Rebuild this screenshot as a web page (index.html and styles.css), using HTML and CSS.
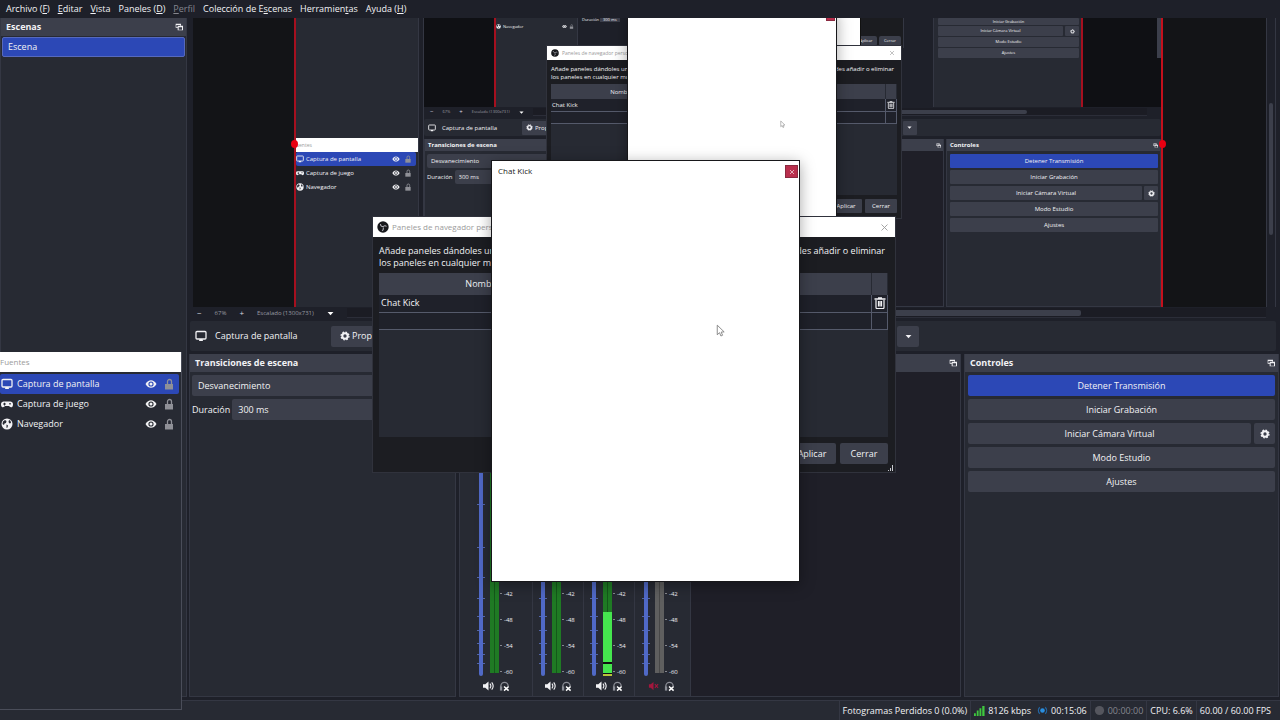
FILE: index.html
```html
<!DOCTYPE html>
<html lang="es">

<head>
    <meta charset="UTF-8">
    <meta name="viewport" content="width=device-width, initial-scale=1.0">
    <title>OBS Studio</title>
    <link rel="stylesheet" href="styles.css">
</head>

<body>
    <!-- Iconos compartidos -->
    <svg class="sprite" aria-hidden="true">
        <symbol id="monitor" viewBox="0 0 12 12"><path d="M2 1.5h8a1 1 0 0 1 1 1v5.500a1 1 0 0 1-1 1H2a1 1 0 0 1-1-1V2.500a1 1 0 0 1 1-1z" fill="none" stroke="currentColor" stroke-width="1.300"/><path d="M4 11l.5-2h3l.5 2z" fill="currentColor"/></symbol>
        <symbol id="gamepad" viewBox="0 0 12 12"><path fill-rule="evenodd" fill="currentColor" d="M3 3.500h6a2.800 2.800 0 0 1 3 3c0 2-1 2.800-2 2.800S8.500 8 7.800 8H4.200C3.500 8 3 9.300 2 9.300S0 8.500 0 6.500a2.800 2.800 0 0 1 3-3zM3 4.800v.8h-.9v1H3v.8h1v-.8h.9v-1H4v-.8zM8.300 5v1.500h1.400V5z"/></symbol>
        <symbol id="globe" viewBox="0 0 12 12"><circle cx="6" cy="6" r="5.500" fill="currentColor"/><path d="M2 3.500l2-1.500 1.500 1L5 5l-1.500.5L3 7 1.500 6zM8 2l1.500.8.5 2.200-1.500.5-1-1.500zM5.500 6.500l1.500 1-.5 2-1 .5z" fill="#272a33"/></symbol>
        <symbol id="eye" viewBox="0 0 12 12"><path fill-rule="evenodd" fill="currentColor" d="M.5 6C2 3.300 4 2.200 6 2.200S10 3.300 11.500 6C10 8.700 8 9.800 6 9.800S2 8.700.5 6zM6 3.400a2.600 2.600 0 1 0 0 5.200 2.600 2.600 0 0 0 0-5.200z"/><circle cx="6" cy="6" r="1.500" fill="currentColor"/></symbol>
        <symbol id="lock" viewBox="0 0 12 12"><path d="M4.500 6V3.500a2 2 0 0 1 4 0V6" fill="none" stroke="currentColor" stroke-width="1.300"/><path d="M2 6h8v5.500H2z" fill="currentColor"/></symbol>
        <symbol id="gear" viewBox="0 0 12 12"><circle cx="6" cy="6" r="3.200" fill="none" stroke="currentColor" stroke-width="2.400"/><circle cx="6" cy="6" r="4.700" fill="none" stroke="currentColor" stroke-width="1.600" stroke-dasharray="2 1.690"/></symbol>
        <symbol id="popout" viewBox="0 0 12 12"><path fill-rule="evenodd" fill="currentColor" d="M1 1h8v3h3v7H4V7H1zM2 3v3h2V4h4V3zM5.500 6.500V10h5V6.500z"/></symbol>
        <symbol id="trash" viewBox="0 0 12 12"><path d="M.5 2h11M4 1h4" stroke="currentColor" stroke-width="1.300"/><path d="M2 3v7.500a1 1 0 0 0 1 1h6a1 1 0 0 0 1-1V3M4.500 4v5.500M6 4v5.500M7.500 4v5.500" fill="none" stroke="currentColor" stroke-width="1.200"/></symbol>
        <symbol id="speaker" viewBox="0 0 12 12"><path d="M0 4h2.500L6 1v10L2.500 8H0z" fill="currentColor"/><path d="M7.500 3.500c1.300 1.500 1.300 3.500 0 5M9.500 2c2 2.500 2 5.500 0 8" fill="none" stroke="currentColor" stroke-width="1.200"/></symbol>
        <symbol id="muted" viewBox="0 0 12 12"><path d="M1 4h2l3-2.500v9L3 8H1z" fill="currentColor"/><path d="M7.500 4l3.500 4M11 4L7.500 8" stroke="currentColor" stroke-width="1.200"/></symbol>
        <symbol id="phones" viewBox="0 0 12 12"><path d="M2 10V6a4 4 0 0 1 8 0" fill="none" stroke="#8b8d96" stroke-width="1.400"/><path d="M1 6.500h2.500V11H1z" fill="#8b8d96"/><path d="M5.500 6.500l5 4.500M10.500 6.500L5.500 11" stroke="#fff" stroke-width="1.700"/></symbol>
        <symbol id="obs" viewBox="0 0 12 12"><circle cx="6" cy="6" r="5.700" fill="#17181c"/><path d="M6 5.500C4.500 5.500 3.300 4.500 3.500 3M6 6c1-1.500 2.500-1.700 3.500-.5M6 6.500c.8 1.300.3 2.700-1 3.200" fill="none" stroke="#b0b0b6" stroke-width="1.100"/></symbol>
        <symbol id="caret" viewBox="0 0 12 12"><path d="M1 3.500h10L6 9z" fill="currentColor"/></symbol>
        <symbol id="cross" viewBox="0 0 12 12"><path d="M2 2l8 8M10 2l-8 8" stroke="currentColor" stroke-width="1.200"/></symbol>
        <symbol id="cursor" viewBox="0 0 12 16"><path d="M1.500 1v11.500l2.700-2.500 1.700 4 2-.9-1.700-3.800 3.600-.2z" fill="#fff" stroke="#777" stroke-width="1"/></symbol>
        <symbol id="ticks" viewBox="0 0 8 176"><path d="M0 4.500h8M0 47.500h8M0 77.500h8M0 98.500h8M0 116.500h8M0 130.500h8M0 143.500h8M0 154.500h8M0 163.500h8" stroke="#5365a8" stroke-width="1"/></symbol>
    </svg>

    <!-- Barra de menú -->
    <nav class="menubar">
        <a href="#">Archivo (<u>F</u>)</a>
        <a href="#"><u>E</u>ditar</a>
        <a href="#"><u>V</u>ista</a>
        <a href="#">Paneles (<u>D</u>)</a>
        <a href="#" class="dim"><u>P</u>erfil</a>
        <a href="#">Colección de E<u>s</u>cenas</a>
        <a href="#">Herramien<u>t</u>as</a>
        <a href="#">Ayuda (<u>H</u>)</a>
    </nav>

    <div class="workspace">
        <!-- Escenas -->
        <section class="dock scenes">
            <h2 class="dock-title">Escenas <svg class="icon"><use href="#popout"/></svg></h2>
            <button class="scene">Escena</button>
        </section>

        <main class="main">
            <!-- Vista previa -->
            <div class="preview">
                <div class="canvas">
                    <div class="screen">
                        <div class="screen-left">
                            <div class="blank"></div>
                            <section class="sources mini">
                                <h2 class="window-title">uentes</h2>
                                <ul>
                                    <li class="selected"><svg class="icon"><use href="#monitor"/></svg><span>Captura de pantalla</span><svg class="icon"><use href="#eye"/></svg><svg class="icon lock"><use href="#lock"/></svg></li>
                                    <li><svg class="icon"><use href="#gamepad"/></svg><span>Captura de juego</span><svg class="icon"><use href="#eye"/></svg><svg class="icon lock"><use href="#lock"/></svg></li>
                                    <li><svg class="icon"><use href="#globe"/></svg><span>Navegador</span><svg class="icon"><use href="#eye"/></svg><svg class="icon lock"><use href="#lock"/></svg></li>
                                </ul>
                            </section>
                        </div>
                        <div class="screen-main mini">
                            <div class="echo">
                                <div class="echo-screen">
                                    <div class="echo-sources">
                                        <svg class="icon"><use href="#globe"/></svg><span>Navegador</span>
                                        <svg class="icon"><use href="#eye"/></svg><svg class="icon lock"><use href="#lock"/></svg>
                                    </div>
                                    <div class="echo-docks">Duración <span class="echo-field">300 ms</span></div>
                                    <div class="echo-controls">
                                        <button class="btn">Iniciar Grabación</button>
                                        <div class="pair">
                                            <button class="btn">Iniciar Cámara Virtual</button>
                                            <button class="btn gear" aria-label="Configurar"><svg class="icon"><use href="#gear"/></svg></button>
                                        </div>
                                        <button class="btn">Modo Estudio</button>
                                        <button class="btn">Ajustes</button>
                                    </div>
                                </div>
                                <div class="echo-scroll"></div>
                            </div>
                            <div class="zoombar">
                                <span>−</span><span>67%</span><span>+</span><span>Escalado (1300x731)</span>
                                <svg class="icon"><use href="#caret"/></svg>
                                <div class="track"><div class="thumb"></div></div>
                            </div>
                            <div class="context">
                                <svg class="icon"><use href="#monitor"/></svg><span class="name">Captura de pantalla</span>
                                <button class="btn"><svg class="icon"><use href="#gear"/></svg>Propiedades</button>
                                <button class="btn more" aria-label="Más"><svg class="icon"><use href="#caret"/></svg></button>
                            </div>
                            <div class="docks">
                                <section class="dock transitions">
                                    <h2 class="dock-title">Transiciones de escena</h2>
                                    <div class="dock-body">
                                        <select class="field" aria-label="Transición"><option>Desvanecimiento</option></select>
                                        <label class="duration">Duración <input class="field" value="300 ms"></label>
                                    </div>
                                </section>
                                <section class="dock mixer">
                                    <h2 class="dock-title"><span></span><svg class="icon"><use href="#popout"/></svg></h2>
                                </section>
                                <section class="dock controls">
                                    <h2 class="dock-title">Controles <svg class="icon"><use href="#popout"/></svg></h2>
                                    <div class="dock-body">
                                        <button class="btn primary">Detener Transmisión</button>
                                        <button class="btn">Iniciar Grabación</button>
                                        <div class="pair">
                                            <button class="btn">Iniciar Cámara Virtual</button>
                                            <button class="btn gear" aria-label="Configurar"><svg class="icon"><use href="#gear"/></svg></button>
                                        </div>
                                        <button class="btn">Modo Estudio</button>
                                        <button class="btn">Ajustes</button>
                                    </div>
                                </section>
                            </div>
                        </div>

                        <!-- Ventanas dentro de la captura -->
                        <div class="echo-dialog">
                            <button class="btn">Aplicar</button>
                            <button class="btn">Cerrar</button>
                        </div>
                        <div class="echo-chat"></div>
                        <div class="dialog mini">
                            <h2 class="window-title"><svg class="icon"><use href="#obs"/></svg><span>Paneles de navegador personalizados</span><svg class="icon x"><use href="#cross"/></svg></h2>
                            <div class="dialog-body">
                                <p><span>Añade paneles dándoles un nombre</span><span>Puedes añadir o eliminar</span></p>
                                <p>los paneles en cualquier momento.</p>
                                <div class="table-box">
                                    <table>
                                        <thead><tr><th class="col-name">Nombre</th><th>URL</th><th class="col-del"></th></tr></thead>
                                        <tbody>
                                            <tr><td>Chat Kick</td><td></td><td><svg class="icon"><use href="#trash"/></svg></td></tr>
                                            <tr><td></td><td></td><td></td></tr>
                                        </tbody>
                                    </table>
                                </div>
                                <div class="dialog-footer"><button class="btn">Aplicar</button><button class="btn">Cerrar</button></div>
                            </div>
                        </div>
                        <div class="chat mini">
                            <button class="close" aria-label="Cerrar"></button>
                            <svg class="cursor"><use href="#cursor"/></svg>
                        </div>
                    </div>
                    <span class="handle left"></span>
                    <span class="handle right"></span>
                </div>
                <div class="vscroll"><div class="thumb"></div></div>
            </div>

            <div class="zoombar">
                <span>−</span><span>67%</span><span>+</span><span>Escalado (1300x731)</span>
                <svg class="icon"><use href="#caret"/></svg>
                <div class="track"><div class="thumb"></div></div>
            </div>

            <div class="context">
                <svg class="icon"><use href="#monitor"/></svg><span class="name">Captura de pantalla</span>
                <button class="btn"><svg class="icon"><use href="#gear"/></svg>Propiedades</button>
                <button class="btn more" aria-label="Más"><svg class="icon"><use href="#caret"/></svg></button>
            </div>

            <div class="docks">
                <section class="dock transitions">
                    <h2 class="dock-title">Transiciones de escena</h2>
                    <div class="dock-body">
                        <select class="field" aria-label="Transición"><option>Desvanecimiento</option></select>
                        <label class="duration">Duración <input class="field" value="300 ms"></label>
                    </div>
                </section>

                <!-- Mezclador de audio -->
                <section class="dock mixer">
                    <h2 class="dock-title"><span></span><svg class="icon"><use href="#popout"/></svg></h2>
                    <div class="channels">
                        <div class="channel wide">
                            <div class="strip">
                                <div class="fader"><svg><use href="#ticks"/></svg><input type="range" aria-label="Volumen 1"></div>
                                <div class="meter"></div>
                                <ul><li>-42</li><li>-48</li><li>-54</li><li>-60</li></ul>
                            </div>
                            <div class="buttons"><svg class="icon"><use href="#speaker"/></svg><svg class="icon"><use href="#phones"/></svg></div>
                        </div>
                        <div class="channel">
                            <div class="strip">
                                <div class="fader"><svg><use href="#ticks"/></svg><input type="range" aria-label="Volumen 2"></div>
                                <div class="meter"></div>
                                <ul><li>-42</li><li>-48</li><li>-54</li><li>-60</li></ul>
                            </div>
                            <div class="buttons"><svg class="icon"><use href="#speaker"/></svg><svg class="icon"><use href="#phones"/></svg></div>
                        </div>
                        <div class="channel">
                            <div class="strip">
                                <div class="fader"><svg><use href="#ticks"/></svg><input type="range" aria-label="Volumen 3"></div>
                                <div class="meter active"><div class="level"></div></div>
                                <ul><li>-42</li><li>-48</li><li>-54</li><li>-60</li></ul>
                            </div>
                            <div class="buttons"><svg class="icon"><use href="#speaker"/></svg><svg class="icon"><use href="#phones"/></svg></div>
                        </div>
                        <div class="channel last">
                            <div class="strip">
                                <div class="fader"><svg><use href="#ticks"/></svg><input type="range" aria-label="Volumen 4"></div>
                                <div class="meter off"></div>
                                <ul><li>-42</li><li>-48</li><li>-54</li><li>-60</li></ul>
                            </div>
                            <div class="buttons"><svg class="icon red"><use href="#muted"/></svg><svg class="icon"><use href="#phones"/></svg></div>
                        </div>
                    </div>
                </section>

                <section class="dock controls">
                    <h2 class="dock-title">Controles <svg class="icon"><use href="#popout"/></svg></h2>
                    <div class="dock-body">
                        <button class="btn primary">Detener Transmisión</button>
                        <button class="btn">Iniciar Grabación</button>
                        <div class="pair">
                            <button class="btn">Iniciar Cámara Virtual</button>
                            <button class="btn gear" aria-label="Configurar"><svg class="icon"><use href="#gear"/></svg></button>
                        </div>
                        <button class="btn">Modo Estudio</button>
                        <button class="btn">Ajustes</button>
                    </div>
                </section>
            </div>
        </main>
    </div>

    <!-- Barra de estado -->
    <footer class="statusbar">
        <span class="cell">Fotogramas Perdidos 0 (0.0%)</span>
        <span class="cell"><svg class="icon" viewBox="0 0 12 12"><path d="M0 9h2v3H0zM3 6h2v6H3zM6 3.500h2V12H6zM9 1h2.500v11H9z" fill="#3fc83f"/></svg>8126 kbps</span>
        <span class="cell plain"><svg class="icon" viewBox="0 0 12 12"><circle cx="6" cy="6" r="2.500" fill="#2a8fe0"/><path d="M3 2.500C1 4.500 1 7.500 3 9.500M9 2.500c2 2 2 5 0 7" fill="none" stroke="#2467a5" stroke-width="1.300"/></svg>00:15:06</span>
        <span class="cell dim"><svg class="icon" viewBox="0 0 12 12"><circle cx="6" cy="6" r="5" fill="#55565e"/></svg>00:00:00</span>
        <span class="cell">CPU: 6.6%</span>
        <span class="cell">60.00 / 60.00 FPS</span>
    </footer>

    <!-- Ventana flotante de fuentes -->
    <section class="sources floating">
        <h2 class="window-title">Fuentes</h2>
        <ul>
            <li class="selected"><svg class="icon"><use href="#monitor"/></svg><span>Captura de pantalla</span><svg class="icon"><use href="#eye"/></svg><svg class="icon lock"><use href="#lock"/></svg></li>
            <li><svg class="icon"><use href="#gamepad"/></svg><span>Captura de juego</span><svg class="icon"><use href="#eye"/></svg><svg class="icon lock"><use href="#lock"/></svg></li>
            <li><svg class="icon"><use href="#globe"/></svg><span>Navegador</span><svg class="icon"><use href="#eye"/></svg><svg class="icon lock"><use href="#lock"/></svg></li>
        </ul>
    </section>

    <!-- Paneles de navegador -->
    <div class="dialog">
        <h2 class="window-title"><svg class="icon"><use href="#obs"/></svg><span>Paneles de navegador personalizados</span><svg class="icon x"><use href="#cross"/></svg></h2>
        <div class="dialog-body">
            <p><span>Añade paneles dándoles un nombre</span><span>Puedes añadir o eliminar</span></p>
            <p>los paneles en cualquier momento.</p>
            <div class="table-box">
                <table>
                    <thead><tr><th class="col-name">Nombre</th><th>URL</th><th class="col-del"></th></tr></thead>
                    <tbody>
                        <tr><td>Chat Kick</td><td></td><td><svg class="icon"><use href="#trash"/></svg></td></tr>
                        <tr><td></td><td></td><td></td></tr>
                    </tbody>
                </table>
            </div>
            <div class="dialog-footer"><button class="btn">Aplicar</button><button class="btn">Cerrar</button></div>
        </div>
        <svg class="grip" viewBox="0 0 6 6"><path d="M0 5h1v1H0zM2 3h1v3H2zM4 0h1v6H4z" fill="#c8c9d0"/></svg>
    </div>

    <!-- Chat Kick -->
    <div class="chat">
        <h2>Chat Kick</h2>
        <button class="close" aria-label="Cerrar"><svg class="icon"><use href="#cross"/></svg></button>
        <svg class="cursor"><use href="#cursor"/></svg>
    </div>
</body>

</html>
```

FILE: styles.css
```css
/* Base */
* {
    box-sizing: border-box;
}

body {
    margin: 0;
    min-height: 100vh;
    display: flex;
    flex-direction: column;
    position: relative;
    overflow: hidden;
    background-color: #1e2029;
    color: #f2f2f5;
    font-family: "Open Sans", "Noto Sans", sans-serif;
    font-size: 9px;
    line-height: 12px;
}

h2, p, ul {
    margin: 0;
    padding: 0;
    list-style: none;
    font-size: inherit;
    font-weight: normal;
}

button, input, select {
    font: inherit;
    color: inherit;
    border: none;
    margin: 0;
    padding: 0;
}

.sprite {
    display: none;
}

.icon {
    width: 12px;
    height: 12px;
    flex: none;
}

.mini {
    font-size: 6px;
    line-height: 8px;
}

.mini .icon {
    width: 8px;
    height: 8px;
}

.dim {
    color: #85868e;
}

.lock {
    color: #8f9097;
}

.red {
    color: #a3173d;
}

/* Menú */
.menubar {
    height: 18px;
    padding: 0 6px;
    display: flex;
    align-items: center;
    gap: 8px;
}

.menubar a {
    color: inherit;
    text-decoration: none;
}

.menubar .dim {
    color: #85868e;
}

/* Zona de trabajo */
.workspace {
    flex: 1;
    display: flex;
    gap: 2px;
    padding-bottom: 3px;
}

.main {
    flex: 1;
    min-width: 0;
    display: flex;
    flex-direction: column;
}

/* Paneles */
.dock {
    display: flex;
    flex-direction: column;
    background-color: #272a33;
    border: 1px solid #343743;
    border-top: none;
}

.dock-title {
    height: 18px;
    padding: 0 3px 0 5px;
    display: flex;
    align-items: center;
    justify-content: space-between;
    background-color: #3c3f4b;
    font-weight: bold;
}

.dock-title .icon {
    width: 8px;
    height: 8px;
}

.mini .dock-title {
    height: 12px;
    padding: 0 2px 0 3px;
}

.mini .dock-title .icon {
    width: 5px;
    height: 5px;
}

.scenes {
    width: 187px;
}

.scene {
    height: 20px;
    margin: 1px;
    padding: 0 5px;
    text-align: left;
    background-color: #2c48b6;
    border: 1px solid #5669bd;
    border-radius: 2px;
}

.btn {
    height: 21px;
    display: flex;
    align-items: center;
    justify-content: center;
    gap: 2px;
    background-color: #3c3f4b;
    border-radius: 2px;
}

.primary {
    background-color: #2c48b6;
}

.mini .btn {
    height: 14px;
    border-radius: 1px;
}

.btn .icon {
    width: 10px;
    height: 10px;
}

.mini .btn .icon {
    width: 7px;
    height: 7px;
}

/* Vista previa */
.preview {
    flex: 1;
    min-height: 289px;
    margin: 0 4px;
    display: flex;
}

.canvas {
    flex: 1;
    min-width: 0;
    padding: 0 103px 0 101px;
    display: flex;
    position: relative;
    background-color: #131417;
}

.screen {
    flex: 1;
    min-width: 0;
    display: flex;
    gap: 4px;
    position: relative;
    overflow: hidden;
    background-color: #1e2029;
    border-left: 2px solid #a5101f;
    border-right: 2px solid #c4101c;
}

.handle {
    position: absolute;
    top: 122px;
    width: 7px;
    height: 8px;
    border-radius: 50%;
    background-color: #e80012;
}

.handle.left {
    left: 98px;
}

.handle.right {
    right: 100px;
}

.vscroll {
    width: 10px;
    padding: 85px 2px 0;
    border-left: 1px solid #343743;
    border-right: 1px solid #343743;
}

.vscroll .thumb {
    height: 132px;
    border-radius: 2px;
    background-color: #3c3f4b;
}

.screen-left {
    width: 123px;
    display: flex;
    flex-direction: column;
    background-color: #272a33;
    border-right: 1px solid #343743;
}

.blank {
    height: 120px;
}

.screen-main {
    flex: 1;
    min-width: 0;
    display: flex;
    flex-direction: column;
    border-left: 1px solid #343743;
}

/* Imagen repetida dentro de la captura */
.echo {
    height: 89px;
    padding-left: 70px;
    display: flex;
    overflow: hidden;
    background-color: #0f1014;
}

.echo-screen {
    flex: 1;
    margin-right: 74px;
    display: flex;
    border-left: 2px solid #a5101f;
    border-right: 2px solid #a5101f;
    background-color: #1e2029;
    font-size: 4px;
}

.echo .icon, .echo .btn .icon {
    width: 5px;
    height: 5px;
}

.echo-sources {
    width: 82px;
    padding: 6px 3px 0 0;
    display: flex;
    gap: 2px;
    align-items: flex-start;
    background-color: #272a33;
    border-right: 1px solid #343743;
    line-height: 6px;
}

.echo-sources span {
    flex: 1;
}

.echo-docks {
    flex: 1;
    padding-left: 4px;
    line-height: 4px;
}

.echo-field {
    padding: 0 3px;
    background-color: #3c3f4b;
}

.echo-controls {
    width: 148px;
    padding: 0 2px 0 4px;
    background-color: #272a33;
    border-left: 1px solid #343743;
}

.echo-controls .btn {
    width: 100%;
    height: 10px;
    margin-bottom: 1px;
}

.echo-controls > .btn:first-child {
    height: 7px;
}

.echo-controls .gear {
    width: 12px;
}

.echo-scroll {
    width: 4px;
    height: 40px;
    background-color: #3c3f4b;
}

.echo-chat {
    position: absolute;
    left: 453px;
    top: 0;
    width: 112px;
    height: 29px;
    background-color: #fff;
    border-right: 1px solid #111;
}

.echo-dialog {
    position: absolute;
    left: 453px;
    top: 0;
    width: 155px;
    height: 30px;
    padding: 0 2px 2px;
    display: flex;
    gap: 2px;
    align-items: flex-end;
    justify-content: flex-end;
    background-color: #1b1c20;
    border-right: 1px solid #343743;
    font-size: 4px;
}

.echo-dialog .btn {
    width: 22px;
    height: 10px;
}

/* Zoom */
.zoombar {
    height: 12px;
    margin-left: 4px;
    padding-left: 4px;
    display: flex;
    align-items: center;
    gap: 13px;
    color: #9a9ba3;
    font-size: 6px;
}

.zoombar span:first-child, .zoombar span:nth-child(3) {
    color: #dcdce0;
    font-size: 8px;
}

.zoombar .icon {
    width: 7px;
    height: 7px;
    color: #fff;
}

.zoombar .track {
    flex: 1;
    height: 10px;
    margin-right: 14px;
    padding: 2px 0;
    background-color: #1b1c24;
    border-bottom: 1px solid #2b2d38;
}

.zoombar .thumb {
    width: 450px;
    height: 6px;
    margin-left: 284px;
    border-radius: 2px;
    background-color: #3c3f4b;
}

.mini .zoombar {
    height: 10px;
    padding-left: 2px;
    gap: 9px;
    font-size: 4px;
}

.mini .zoombar span:first-child, .mini .zoombar span:nth-child(3) {
    font-size: 6px;
}

.mini .zoombar .icon {
    width: 5px;
    height: 5px;
}

.mini .zoombar .track {
    height: 8px;
}

.mini .zoombar .thumb {
    width: 300px;
    height: 4px;
    margin-left: 194px;
}

/* Barra de la fuente */
.context {
    height: 30px;
    margin: 2px 4px 3px 1px;
    padding: 0 5px;
    display: flex;
    align-items: center;
    gap: 8px;
    background-color: #272a33;
    border-radius: 2px;
}

.context .name {
    width: 108px;
}

.context .btn {
    width: 90px;
    padding-left: 9px;
    justify-content: flex-start;
}

.context .more {
    width: 22px;
    margin-left: 468px;
    padding-left: 8px;
}

.context .more .icon {
    width: 7px;
    height: 7px;
}

.mini .context {
    height: 17px;
    margin: 2px 0 3px;
    padding: 0 4px;
    gap: 6px;
}

.mini .context .name {
    width: 74px;
}

.mini .context .btn {
    width: 60px;
    padding-left: 4px;
}

.mini .context .more {
    width: 14px;
    margin-left: 315px;
}

.mini .context .more .icon {
    width: 5px;
    height: 5px;
}

/* Fila inferior de paneles */
.docks {
    height: 343px;
    padding-right: 1px;
    display: flex;
    gap: 3px;
}

.mini .docks {
    flex: 1;
    height: auto;
    padding-right: 0;
    gap: 2px;
}

.transitions {
    width: 267px;
}

.mini .transitions {
    width: 180px;
}

.transitions .dock-body {
    padding: 3px 2px;
    display: flex;
    flex-direction: column;
    gap: 3px;
}

.field {
    height: 21px;
    padding: 0 6px;
    flex: 1 0 auto;
    appearance: none;
    background-color: #3c3f4b;
    border-radius: 2px;
}

.duration {
    display: flex;
    align-items: center;
    gap: 2px;
}

.duration .field {
    flex: 1;
    min-width: 0;
}

.mini .dock-body {
    padding: 3px 2px;
    gap: 2px;
}

.mini .field {
    height: 14px;
    padding: 0 4px;
}

.controls {
    width: 315px;
}

.mini .controls {
    width: 215px;
}

.controls .dock-body {
    padding: 3px 3px;
    display: flex;
    flex-direction: column;
    gap: 3px;
}

.mini .controls .dock-body {
    padding: 3px 2px 3px 3px;
    gap: 2px;
}

.pair {
    display: flex;
    gap: 3px;
}

.pair .btn {
    flex: 1;
}

.pair .gear {
    flex: none;
    width: 21px;
}

.mini .pair {
    gap: 2px;
}

.mini .pair .gear {
    width: 14px;
}

/* Mezclador */
.mixer {
    flex: 1;
    min-width: 0;
    background-color: #1f1f28;
}

.channels {
    flex: 1;
    display: flex;
}

.channel {
    width: 51px;
    padding: 0 0 4px 6px;
    display: flex;
    flex-direction: column;
    gap: 4px;
    background-color: #272a33;
    border-right: 1px solid #343743;
}

.channel.wide {
    width: 73px;
    padding-left: 17px;
}

.channel.last {
    width: 56px;
    padding-left: 7px;
}

.strip {
    flex: 1;
    display: flex;
    align-items: stretch;
}

.fader {
    width: 8px;
    margin-right: 5px;
    display: grid;
    justify-items: center;
    align-items: end;
}

.fader svg, .fader input {
    grid-area: 1 / 1;
}

.fader svg {
    width: 8px;
    height: 176px;
}

.fader input {
    width: 4px;
    height: 100%;
    appearance: none;
    writing-mode: vertical-lr;
    background-color: #5069c6;
    border-radius: 2px;
}

.fader input::-webkit-slider-thumb {
    appearance: none;
    width: 4px;
    height: 4px;
}

.meter {
    width: 9px;
    margin-bottom: 3px;
    display: flex;
    align-items: flex-end;
    background: linear-gradient(90deg, #1f7a24 4px, #14591a 4px 5px, #1f7a24 5px);
}

.meter.off {
    background: linear-gradient(90deg, #5f5f5f 4px, #484848 4px 5px, #5f5f5f 5px);
}

.meter.active {
    margin-bottom: 0;
}

.level {
    width: 9px;
    height: 64px;
    background: linear-gradient(#45e64e 50px, #111 50px 52px, #45e64e 52px 61px, #111 61px 62px, #b9c43a 62px);
}

.strip ul {
    padding-left: 1px;
    display: flex;
    flex-direction: column;
    justify-content: flex-end;
    font-size: 6px;
    line-height: 8px;
}

.strip li {
    height: 26px;
    display: flex;
    align-items: flex-end;
    gap: 2px;
}

.strip li::before {
    content: "";
    width: 2px;
    height: 1px;
    margin-bottom: 4px;
    background-color: #85868e;
}

.buttons {
    display: flex;
    gap: 5px;
    padding-left: 6px;
}

.buttons .icon {
    width: 11px;
}

/* Barra de estado */
.statusbar {
    height: 20px;
    padding-right: 6px;
    display: flex;
    justify-content: flex-end;
    background-color: #272a33;
    border-top: 1px solid #343743;
}

.cell {
    padding: 0 3px;
    display: flex;
    align-items: center;
    gap: 3px;
    border-left: 1px solid #343743;
}

.cell .icon {
    width: 11px;
    height: 11px;
}

.cell.plain {
    border-left: none;
}

/* Ventana de fuentes */
.sources {
    background-color: #272a33;
}

.sources.floating {
    position: absolute;
    left: 0;
    top: 352px;
    width: 182px;
    height: 358px;
    border-right: 1px solid #4a4d59;
    border-bottom: 1px solid #4a4d59;
}

.window-title {
    height: 20px;
    display: flex;
    align-items: center;
    background-color: #fff;
    color: #9b9b9b;
    font-size: 8px;
}

.mini .window-title, .sources.mini .window-title {
    height: 14px;
    font-size: 5px;
}

.sources ul {
    padding: 2px 2px 0 0;
}

.sources li {
    height: 20px;
    padding: 0 4px 0 1px;
    display: flex;
    align-items: center;
    gap: 6px;
    border-radius: 2px;
}

.sources li span {
    flex: 1;
    margin-left: -2px;
}

.sources .selected {
    background-color: #2c48b6;
}

.sources.mini ul {
    padding-top: 0;
}

.sources.mini li {
    height: 14px;
    padding: 0 4px 0 0;
    gap: 4px;
}

/* Diálogo */
.dialog {
    position: absolute;
    left: 372px;
    top: 216px;
    width: 524px;
    height: 257px;
    display: flex;
    flex-direction: column;
    background-color: #1c1d22;
    border: 1px solid #30323c;
}

.dialog .window-title {
    padding: 0 6px 0 4px;
    gap: 3px;
}

.dialog .window-title span {
    flex: 1;
}

.dialog .x {
    width: 9px;
    height: 9px;
}

.dialog.mini .x {
    width: 6px;
    height: 6px;
}

.dialog-body {
    flex: 1;
    padding: 8px 7px 8px 6px;
    display: flex;
    flex-direction: column;
}

.dialog-body p {
    display: flex;
    justify-content: space-between;
}

.dialog-body p span:last-child {
    margin-right: 3px;
}

.table-box {
    flex: 1;
    margin: 4px 0 6px;
    background-color: #272a33;
}

table {
    width: 100%;
    table-layout: fixed;
    border-collapse: collapse;
}

th {
    height: 22px;
    padding: 0;
    font-weight: normal;
    background-color: #3c3f4b;
    border-right: 1px solid #272a33;
}

.col-name {
    width: 208px;
}

.col-del {
    width: 16px;
}

td {
    height: 17px;
    padding: 0 2px;
    background-color: #1f212a;
    border-bottom: 1px solid #555a6b;
    border-right: 1px solid #555a6b;
}

td .icon {
    display: block;
}

.dialog-footer {
    display: flex;
    justify-content: flex-end;
    gap: 4px;
}

.dialog-footer .btn {
    width: 48px;
}

.grip {
    position: absolute;
    right: 1px;
    bottom: 1px;
    width: 6px;
    height: 6px;
}

.dialog.mini {
    left: 250px;
    top: 27px;
    width: 356px;
    height: 174px;
}

.dialog.mini .dialog-body {
    padding: 5px 4px;
}

.mini .table-box {
    margin: 3px 0 4px;
}

.mini th {
    height: 15px;
}

.mini td {
    height: 12px;
    padding: 0 1px;
}

.mini .col-name {
    width: 142px;
}

.mini .col-del {
    width: 11px;
}

.mini .dialog-footer {
    gap: 3px;
}

.mini .dialog-footer .btn {
    width: 32px;
}

/* Ventana del chat */
.chat {
    position: absolute;
    left: 491px;
    top: 160px;
    width: 309px;
    height: 422px;
    padding: 4px 6px;
    background-color: #fff;
    border: 1px solid #17171a;
    color: #222;
    font-size: 8px;
    box-shadow: 0 3px 14px rgba(0, 0, 0, 0.35);
}

.close {
    position: absolute;
    right: 1px;
    top: 4px;
    width: 13px;
    height: 13px;
    display: flex;
    align-items: center;
    justify-content: center;
    background-color: #b92f4d;
    border: 1px solid #8a2a40;
    color: #fff;
}

.close .icon {
    width: 6px;
    height: 6px;
}

.cursor {
    position: absolute;
    left: 224px;
    top: 163px;
    width: 10px;
    height: 14px;
}

.chat.mini {
    left: 331px;
    top: -8px;
    width: 210px;
    height: 207px;
}

.mini .close {
    top: 1px;
    width: 9px;
    height: 9px;
}

.mini .cursor {
    left: 152px;
    top: 109px;
    width: 6px;
    height: 9px;
}
```
